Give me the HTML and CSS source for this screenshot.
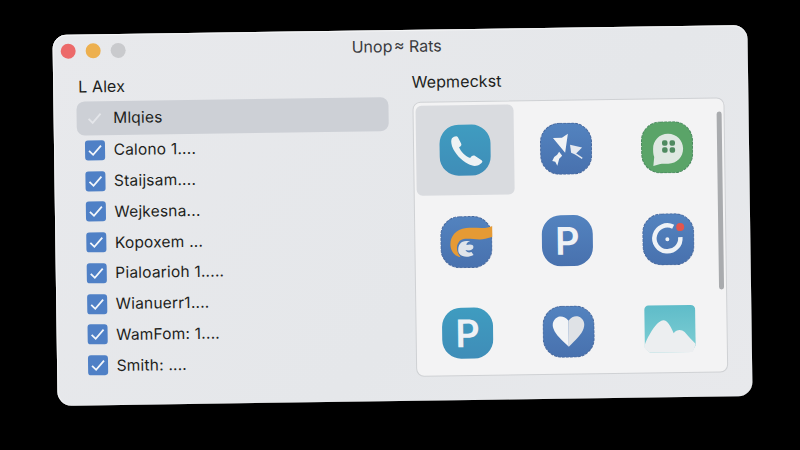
FILE: index.html
```html
<!DOCTYPE html>
<html lang="en">
  <head>
    <meta charset="UTF-8" />
    <meta name="viewport" content="width=device-width, initial-scale=1.0" />
    <title>Unop Rats</title>
    <link rel="stylesheet" href="styles.css">
  </head>

  <body>
    <div class="window">
      <div class="titlebar">
        <div class="dots">
          <span class="dot red"></span>
          <span class="dot orange"></span>
          <span class="dot gray"></span>
        </div>
        <div class="title">Unop&#8202;&#8776; Rats</div>
      </div>

      <div class="content">
        <section class="people">
          <h2 class="heading">L Alex</h2>
          <ul class="list">
            <li class="row selected">
              <svg class="tick" viewBox="0 0 20 20"><path d="M4 10.5l4 4 8-9" /></svg>
              <span>Mlqies</span>
            </li>
            <li class="row"><span class="box"><svg class="tick" viewBox="0 0 20 20"><path d="M4 10.5l4 4 8-9" /></svg></span><span>Calono 1....</span></li>
            <li class="row"><span class="box"><svg class="tick" viewBox="0 0 20 20"><path d="M4 10.5l4 4 8-9" /></svg></span><span>Staijsam....</span></li>
            <li class="row"><span class="box"><svg class="tick" viewBox="0 0 20 20"><path d="M4 10.5l4 4 8-9" /></svg></span><span>Wejkesna...</span></li>
            <li class="row"><span class="box"><svg class="tick" viewBox="0 0 20 20"><path d="M4 10.5l4 4 8-9" /></svg></span><span>Kopoxem ...</span></li>
            <li class="row"><span class="box"><svg class="tick" viewBox="0 0 20 20"><path d="M4 10.5l4 4 8-9" /></svg></span><span>Pialoarioh 1.....</span></li>
            <li class="row"><span class="box"><svg class="tick" viewBox="0 0 20 20"><path d="M4 10.5l4 4 8-9" /></svg></span><span>Wianuerr1....</span></li>
            <li class="row"><span class="box"><svg class="tick" viewBox="0 0 20 20"><path d="M4 10.5l4 4 8-9" /></svg></span><span>WamFom: 1....</span></li>
            <li class="row"><span class="box"><svg class="tick" viewBox="0 0 20 20"><path d="M4 10.5l4 4 8-9" /></svg></span><span>Smith: ....</span></li>
          </ul>
        </section>

        <section class="apps">
          <h2 class="heading apps-heading">Wepmeckst</h2>
          <div class="panel">
            <div class="scrollbar"></div>
            <div class="grid">
              <div class="tile active">
                <svg class="icon" viewBox="0 0 52 52">
                  <defs>
                    <linearGradient id="teal" x1="0" y1="0" x2="0" y2="1"><stop offset="0" stop-color="#3f9cc0" /><stop offset="1" stop-color="#3f8db8" /></linearGradient>
                    <linearGradient id="blue" x1="0" y1="0" x2="0" y2="1"><stop offset="0" stop-color="#5383bf" /><stop offset="1" stop-color="#4871ae" /></linearGradient>
                  </defs>
                  <rect x="0.5" y="0.5" width="51" height="51" rx="19" fill="url(#teal)" />
                  <path d="M13 14c2-2 5-3 6-1l3 6c1 2 0 3-2 4 2 5 6 9 11 11 1-2 3-3 5-2l6 4c2 1 1 3-1 4-4 3-8 2-12 0-7-4-13-10-16-18-1-4-1-6 0-8z" fill="#eef2f4" />
                </svg>
              </div>
              <div class="tile">
                <svg class="icon" viewBox="0 0 52 52">
                  <rect x="0.5" y="0.5" width="51" height="51" rx="19" fill="url(#blue)" stroke="#47699f" stroke-dasharray="3 1" />
                  <path d="M13 15l9 0 6-4-3 19z" fill="#f1f3f5" />
                  <path d="M30 22l12 3-7 7-4-2z" fill="#e6eaf0" />
                  <path d="M35 31l7 5" stroke="#e6eaf0" stroke-width="1.5" />
                  <path d="M12 38l2-4 3-2 2-3 3 4-3 3-2 7-2-4z" fill="#f1f3f5" />
                </svg>
              </div>
              <div class="tile">
                <svg class="icon" viewBox="0 0 52 52">
                  <rect x="0.5" y="0.5" width="51" height="51" rx="19" fill="#5aa468" stroke="#4a8a5f" stroke-dasharray="3 1" />
                  <path d="M27 12.5c8.500 0 15 6.500 15 15s-6.500 15-15 15c-3 0-6 0-8 0l-7 2 1-9c-1-3-1-5-1-8 0-8.500 6.500-15 15-15z" fill="#dfe8e2" />
                  <rect x="21" y="19" width="5.500" height="5.500" rx="2" fill="#4f8a60" />
                  <rect x="28.500" y="19" width="5.500" height="5.500" rx="2" fill="#4f8a60" />
                  <rect x="21" y="26" width="5.500" height="5.500" rx="2" fill="#4f8a60" />
                  <rect x="28.500" y="26" width="5.500" height="5.500" rx="2" fill="#4f8a60" />
                </svg>
              </div>
              <div class="tile">
                <svg class="icon" viewBox="0 0 52 52">
                  <rect x="0.5" y="0.5" width="51" height="51" rx="19" fill="url(#blue)" stroke="#47699f" stroke-dasharray="3 1" />
                  <path d="M53 10C46 14 36 11 26 12C15 13 10 21 10 28C10 35 14 40 20 41C16 36 15 30 19 25C24 20 36 25 45 23L53 21Z" fill="#e59a35" />
                  <path d="M26 25C19 25 17 31 18 36C20 41 27 42 33 39L31 36C28 37 26 36 25 34C29 35 33 34 33 31C33 28 29 28 26 29C26 27 27 26 30 25Z" fill="#dfe4ea" />
                </svg>
              </div>
              <div class="tile">
                <svg class="icon" viewBox="0 0 52 52">
                  <rect x="0.5" y="0.5" width="51" height="51" rx="19" fill="url(#blue)" />
                  <text x="26" y="40" class="glyph">P</text>
                </svg>
              </div>
              <div class="tile">
                <svg class="icon" viewBox="0 0 52 52">
                  <rect x="0.5" y="0.5" width="51" height="51" rx="19" fill="url(#blue)" stroke="#47699f" stroke-dasharray="3 1" />
                  <path d="M38 24A13 13 0 1 1 31 13.500" fill="none" stroke="#eef2f6" stroke-width="4.500" />
                  <circle cx="25" cy="26" r="2" fill="#eef2f6" />
                  <circle cx="38" cy="14" r="4" fill="#e2564e" />
                </svg>
              </div>
              <div class="tile">
                <svg class="icon" viewBox="0 0 52 52">
                  <rect x="0.5" y="0.5" width="51" height="51" rx="19" fill="url(#teal)" />
                  <text x="26" y="40" class="glyph">P</text>
                </svg>
              </div>
              <div class="tile">
                <svg class="icon" viewBox="0 0 52 52">
                  <rect x="0.5" y="0.5" width="51" height="51" rx="19" fill="url(#blue)" stroke="#47699f" stroke-dasharray="3 1" />
                  <path d="M26 15c-3-4-7-5-10-4-5 2-7 7-5 12 2 6 8 11 15 18z" fill="#f2f4f6" />
                  <path d="M26 15c3-4 7-5 10-4 5 2 7 7 5 12-2 6-8 11-15 18z" fill="#dfe2e6" />
                </svg>
              </div>
              <div class="tile">
                <svg class="icon" viewBox="0 0 52 52">
                  <defs>
                    <linearGradient id="sky" x1="0" y1="0" x2="0" y2="1"><stop offset="0" stop-color="#5fbcc9" /><stop offset="1" stop-color="#7fcfd4" /></linearGradient>
                  </defs>
                  <path d="M5 1h42c3 0 5 2 5 5v35l-4 7H6l-5-5V5c0-2 2-4 4-4z" fill="url(#sky)" />
                  <path d="M1 40C5 30 13 17 19 16C24 15 28 24 30 29C33 25 38 25 41 28C45 33 49 37 52 40L49 48H6L1 44Z" fill="#eceef0" />
                </svg>
              </div>
            </div>
          </div>
        </section>
      </div>
    </div>
  </body>
</html>
```

FILE: styles.css
```css
html,
body {
  margin: 0;
  height: 450px;
  overflow: hidden;
  background-color: #000;
}

body {
  font-family: 'Inter', 'Liberation Sans', sans-serif;
  color: #1d1e20;
}

.window {
  width: 695px;
  height: 371px;
  margin: 30px 0 0 54.5px;
  box-sizing: border-box;
  padding: 6px 0 0 0;
  background: linear-gradient(135deg, #e8e9ec, #e5e7ea 60%, #e8e9ec);
  border-radius: 14px;
  box-shadow: inset 0 1px 1px #f7f8f9, inset 1px 0 1px #f4f5f6;
  transform: rotate(-0.8deg);
}

.titlebar {
  display: grid;
  grid-template-columns: 1fr auto 1fr;
  align-items: center;
  height: 30px;
  padding: 0 15px 14px 8px;
  box-sizing: border-box;
}

.dots {
  display: flex;
  gap: 10px;
}

.dot {
  width: 15px;
  height: 15px;
  border-radius: 50%;
}

.red {
  background-color: #ec6a6a;
}

.orange {
  background-color: #edb04f;
}

.gray {
  background-color: #c9cacd;
}

.title {
  font-size: 16px;
  color: #3a3b3e;
}

.content {
  display: flex;
  gap: 23.5px;
  padding: 6px 0 0 23px;
}

.heading {
  margin: 0 0 5px 2px;
  font-size: 16px;
  font-weight: 400;
  letter-spacing: 0.1px;
  line-height: 20px;
}

.people {
  width: 312px;
}

.list {
  list-style: none;
  margin: 0;
  padding: 0;
}

.row {
  display: flex;
  align-items: center;
  gap: 9px;
  height: 30.75px;
  padding-left: 7.5px;
  font-size: 15.5px;
  letter-spacing: 0.2px;
}

.selected {
  height: 33.5px;
  background-color: #cdd0d6;
  border-radius: 8px;
}

.selected .tick {
  width: 20px;
  height: 20px;
  stroke: #e4e6ea;
}

.box {
  display: flex;
  width: 20px;
  height: 20px;
  background-color: #4f80c6;
  border-radius: 3px;
}

.tick {
  fill: none;
  stroke: #f4f7fb;
  stroke-width: 1.8;
}

.apps {
  width: 312px;
}

.apps-heading {
  margin: 0 0 10px;
}

.panel {
  position: relative;
  box-sizing: border-box;
  height: 275px;
  padding: 3px 0 0 2px;
  background-color: #f3f3f4;
  border: 1px solid #cfd1d4;
  border-radius: 8px;
}

.scrollbar {
  position: absolute;
  top: 13px;
  right: 2px;
  width: 5px;
  height: 178px;
  background-color: #a9abae;
  border-radius: 3px;
}

.grid {
  display: grid;
  grid-template-columns: repeat(3, 98px);
  grid-auto-rows: 90px;
  column-gap: 3px;
  row-gap: 1.5px;
}

.tile {
  display: flex;
  align-items: center;
  justify-content: center;
  border-radius: 6px;
}

.active {
  background-color: #d9dbdf;
}

.icon {
  width: 52px;
  height: 52px;
}

.glyph {
  font-family: 'Inter', 'Liberation Sans', sans-serif;
  font-size: 38px;
  font-weight: 600;
  fill: #eef1f5;
  text-anchor: middle;
}
```
